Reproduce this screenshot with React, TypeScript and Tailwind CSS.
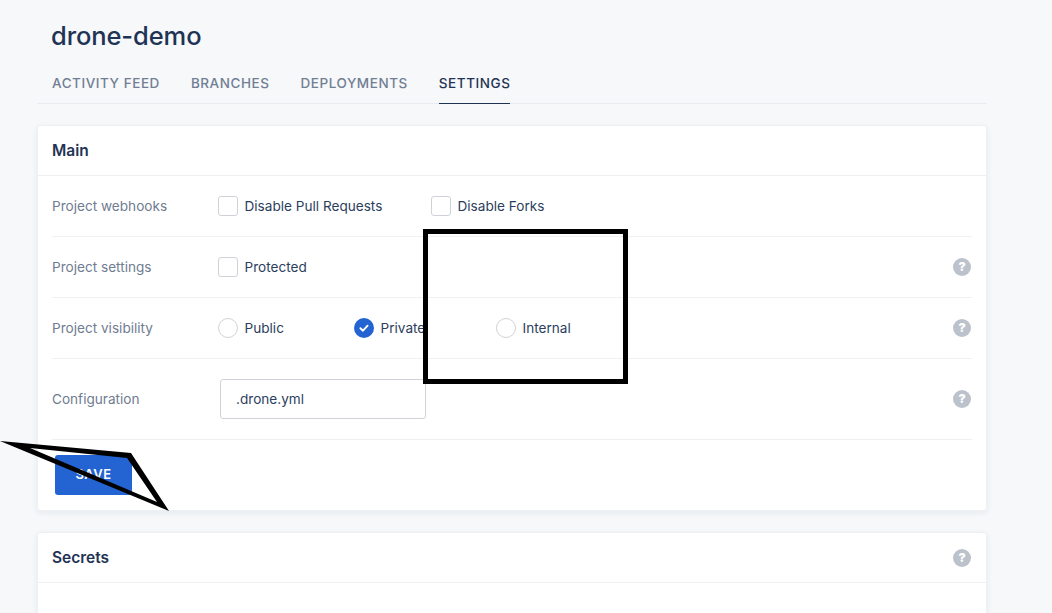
import type { ReactNode } from "react";

const tabs = ["ACTIVITY FEED", "BRANCHES", "DEPLOYMENTS", "SETTINGS"];

const HelpIcon = () => (
  <span className="mr-px flex h-[18px] w-[18px] shrink-0 items-center justify-center rounded-full bg-[#bcc2cc] text-[12px] leading-none font-black text-white">
    ?
  </span>
);

const Checkbox = ({ label, width }: { label: string; width: string }) => (
  <label className={`flex items-center ${width}`}>
    <span className="h-5 w-5 shrink-0 rounded-[3px] border border-[#cfd2d8] bg-white" />
    <span className="ml-[6.5px] text-[13.6px] text-[#2c3e5d]">{label}</span>
  </label>
);

const Radio = ({
  label,
  width,
  checked,
}: {
  label: string;
  width: string;
  checked?: boolean;
}) => (
  <label className={`flex items-center ${width}`}>
    {checked ? (
      <span className="flex h-5 w-5 shrink-0 items-center justify-center rounded-full bg-[#2364d2]">
        <svg viewBox="0 0 12 12" className="h-3 w-3" fill="none">
          <path
            d="M2.4 6.2 5 8.7l4.6-5"
            stroke="#fff"
            strokeWidth="1.9"
            strokeLinecap="round"
            strokeLinejoin="round"
          />
        </svg>
      </span>
    ) : (
      <span className="h-5 w-5 shrink-0 rounded-full border border-[#cfd2d8] bg-white" />
    )}
    <span className="ml-[6.5px] text-[13.6px] text-[#2c3e5d]">{label}</span>
  </label>
);

const Row = ({
  label,
  help,
  height,
  children,
}: {
  label: string;
  help?: boolean;
  height: string;
  children: ReactNode;
}) => (
  <div className={`flex items-center border-b border-[#eef0f3] ${height}`}>
    <div className="w-[166px] shrink-0 text-[13.6px] text-[#6f7c91]">{label}</div>
    <div className="flex flex-1 items-center">{children}</div>
    {help && <HelpIcon />}
  </div>
);

const App = () => {
  return (
    <div className="relative h-[613px] overflow-hidden bg-[#f6f8fa] font-['Inter',sans-serif]">
      <div className="box-content w-[950px] pl-[37px]">
        <div className="border-b border-[#e8ebef] px-[15px] pt-[19px]">
          <h1 className="-ml-px text-[25.5px] leading-[34px] font-medium tracking-[-0.1px] text-[#1f3354]">
            drone-demo
          </h1>
          <nav className="mt-[14px] flex gap-[31px]">
            {tabs.map((tab) => (
              <div
                key={tab}
                className={`-mb-px h-[37px] border-b pt-[6px] text-[13.5px] leading-[20px] font-medium tracking-[0.55px] ${
                  tab === "SETTINGS"
                    ? "border-[#1f3354] text-[#1f3354]"
                    : "border-transparent text-[#717e93]"
                }`}
              >
                {tab}
              </div>
            ))}
          </nav>
        </div>

        <section className="mt-[21px] h-[386px] rounded-[3px] border border-[#eef0f3] bg-white shadow-[0_2px_6px_rgba(30,50,80,0.07)]">
          <div className="flex h-[50px] items-center border-b border-[#eef0f3] px-[14px] text-[15.5px] font-semibold text-[#1f3354]">
            Main
          </div>
          <div className="px-[14px]">
            <Row label="Project webhooks" height="h-[61px]">
              <Checkbox label="Disable Pull Requests" width="w-[213px]" />
              <Checkbox label="Disable Forks" width="w-[160px]" />
            </Row>
            <Row label="Project settings" height="h-[61px]" help>
              <Checkbox label="Protected" width="w-[160px]" />
            </Row>
            <Row label="Project visibility" height="h-[61px]" help>
              <Radio label="Public" width="w-[136px]" />
              <Radio label="Private" width="w-[142px]" checked />
              <Radio label="Internal" width="w-[140px]" />
            </Row>
            <Row label="Configuration" height="h-[81px]" help>
              <div className="ml-[2px] flex h-10 w-[206px] items-center rounded-[3px] border border-[#cfd2d8] px-[15px] text-[13.6px] text-[#2c3e5d]">
                .drone.yml
              </div>
            </Row>
            <button className="mt-[15px] ml-[3px] h-10 w-[77px] rounded-[3px] bg-[#2364d2] text-[13px] font-semibold tracking-[0.5px] text-white">
              SAVE
            </button>
          </div>
        </section>

        <section className="mt-[21px] h-[200px] rounded-[3px] border border-[#eef0f3] bg-white shadow-[0_2px_6px_rgba(30,50,80,0.07)]">
          <div className="flex h-[50px] items-center justify-between border-b border-[#eef0f3] px-[14px] text-[15.5px] font-semibold text-[#1f3354]">
            Secrets
            <HelpIcon />
          </div>
        </section>
      </div>

      {/* annotations drawn over the screenshot */}
      <div className="absolute top-[229px] left-[423px] h-[155px] w-[205px] border-[5px] border-black" />
      <svg className="absolute top-0 left-0" width="1052" height="613">
        <path
          fillRule="evenodd"
          d="M0 441 131 453 169 511ZM30 448 127 458 157 502Z"
          fill="#000"
        />
      </svg>
    </div>
  );
};

export default App;
